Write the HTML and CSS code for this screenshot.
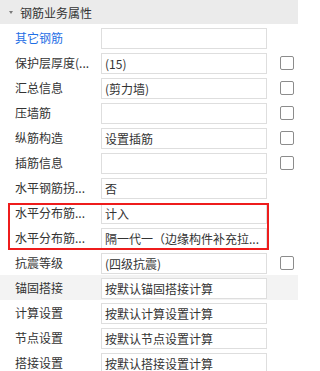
FILE: index.html
```html
<!DOCTYPE html>
<html>
<head>
<meta charset="utf-8">
<link rel="stylesheet" href="styles.css">
</head>
<body>
<div class="panel">
  <div class="header"><span class="caret"></span><span class="title">钢筋业务属性</span></div>
  <div class="rows">
    <div class="row"><div class="label blue">其它钢筋</div><div class="val"></div><div class="chk"></div></div>
    <div class="row"><div class="label">保护层厚度(...</div><div class="val">(15)</div><div class="chk"><span class="box"></span></div></div>
    <div class="row"><div class="label">汇总信息</div><div class="val">(剪力墙)</div><div class="chk"><span class="box"></span></div></div>
    <div class="row"><div class="label">压墙筋</div><div class="val"></div><div class="chk"><span class="box"></span></div></div>
    <div class="row"><div class="label">纵筋构造</div><div class="val">设置插筋</div><div class="chk"><span class="box"></span></div></div>
    <div class="row"><div class="label">插筋信息</div><div class="val"></div><div class="chk"><span class="box"></span></div></div>
    <div class="row"><div class="label">水平钢筋拐...</div><div class="val">否</div><div class="chk"></div></div>
    <div class="row"><div class="label">水平分布筋...</div><div class="val">计入</div><div class="chk"></div></div>
    <div class="row"><div class="label">水平分布筋...</div><div class="val">隔一代一（边缘构件补充拉...</div><div class="chk"></div></div>
    <div class="row"><div class="label">抗震等级</div><div class="val">(四级抗震)</div><div class="chk"><span class="box"></span></div></div>
    <div class="row hl"><div class="label">锚固搭接</div><div class="val">按默认锚固搭接计算</div><div class="chk"></div></div>
    <div class="row"><div class="label">计算设置</div><div class="val">按默认计算设置计算</div><div class="chk"></div></div>
    <div class="row"><div class="label">节点设置</div><div class="val">按默认节点设置计算</div><div class="chk"></div></div>
    <div class="row"><div class="label">搭接设置</div><div class="val">按默认搭接设置计算</div><div class="chk"></div></div>
  </div>
  <div class="mark"></div>
</div>
</body>
</html>
```
FILE: styles.css
```css
html, body {
  margin: 0;
  padding: 0;
  background: #ffffff;
}
body {
  font-family: "Noto Sans CJK SC", "Noto Sans", sans-serif;
  font-size: 12px;
  color: #333333;
  overflow: hidden;
}
.panel {
  position: relative;
  width: 298px;
}
.header {
  height: 24px;
  margin-bottom: 1px;
  background: #ebebeb;
  display: flex;
  align-items: center;
}
.caret {
  width: 0;
  height: 0;
  margin-left: 9px;
  margin-right: 7px;
  border-left: 2.5px solid transparent;
  border-right: 2.5px solid transparent;
  border-top: 3px solid #7a7a7a;
}
.title {
  color: #333333;
}
.row {
  display: grid;
  grid-template-columns: 101px 166px 1fr;
  height: 25px;
  align-items: center;
}
.row.hl {
  background: #f3f3f3;
}
.label {
  padding-left: 15px;
  white-space: nowrap;
  line-height: 25px;
}
.label.blue {
  color: #1f6fe5;
}
.val {
  height: 21px;
  box-sizing: border-box;
  border: 1px solid #dedede;
  background: #ffffff;
  padding: 0 3px 0 3px;
  line-height: 19px;
  white-space: nowrap;
  overflow: hidden;
  margin-top: 1px;
}
.chk {
  display: flex;
  align-items: center;
  height: 25px;
}
.box {
  display: block;
  width: 14px;
  height: 14px;
  box-sizing: border-box;
  border: 1px solid #8c8c8c;
  border-radius: 2px;
  margin-left: 13px;
  margin-top: 1px;
  background: #ffffff;
}
.mark {
  position: absolute;
  left: 8px;
  top: 203px;
  width: 261px;
  height: 47px;
  box-sizing: border-box;
  border: 2px solid #ee1c1c;
  pointer-events: none;
}
```
